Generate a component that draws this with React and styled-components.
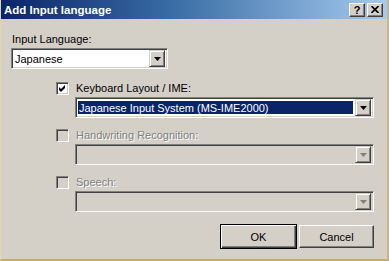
import React from 'react';
import styled, { createGlobalStyle } from 'styled-components';

const GlobalStyle = createGlobalStyle`
  body {
    margin: 0;
    background: #d4d0c8;
    font-family: "Liberation Sans", Arial, sans-serif;
    font-size: 11px;
  }
`;

const Window = styled.div`
  width: 389px;
  height: 261px;
  box-sizing: border-box;
  background: #d4d0c8;
  border-left: 1px solid #e4d6a8;
  border-right: 2px solid #c9b782;
  border-bottom: 2px solid #c3ab6a;
  display: flex;
  flex-direction: column;
`;

const TitleBar = styled.div`
  height: 19px;
  flex: none;
  display: flex;
  align-items: center;
  justify-content: space-between;
  padding: 0 4px 0 3px;
  background: linear-gradient(to right, #0a246a 0%, #3a6ea5 45%, #a6caf0 100%);
  color: #fff;
  font-weight: bold;
  font-size: 11.5px;
`;

const CaptionButtons = styled.div`
  display: flex;
  gap: 2px;
`;

const CaptionButton = styled.div`
  width: 16px;
  height: 14px;
  box-sizing: border-box;
  display: flex;
  align-items: center;
  justify-content: center;
  background: #d4d0c8;
  color: #000;
  font-size: 11px;
  font-weight: bold;
  border: 1px solid;
  border-color: #fff #404040 #404040 #fff;
  box-shadow: inset -1px -1px #808080;
`;

const Content = styled.div`
  padding: 14px 0 0 10px;
  display: flex;
  flex-direction: column;
`;

const Label = styled.div`
  line-height: 13px;
  margin-left: 1px;
  color: ${p => (p.$disabled ? '#808080' : '#000')};
  text-shadow: ${p => (p.$disabled ? '1px 1px 0 #fff' : 'none')};
  white-space: nowrap;
`;

const Combo = styled.div`
  box-sizing: border-box;
  width: ${p => p.$width}px;
  height: 21px;
  margin-top: ${p => p.$top || 0}px;
  display: flex;
  align-items: center;
  padding: 2px;
  background: ${p => (p.$disabled ? '#d4d0c8' : '#fff')};
  border: 1px solid;
  border-color: #808080 #fff #fff #808080;
  box-shadow: inset 1px 1px #404040, inset -1px -1px #d4d0c8;
`;

const ComboText = styled.div`
  flex: 1;
  align-self: stretch;
  display: flex;
  align-items: center;
  margin: 1px 2px 1px 0;
  padding-left: 1px;
  white-space: nowrap;
  background: ${p => (p.$selected ? '#0a246a' : 'transparent')};
  color: ${p => (p.$selected ? '#fff' : '#000')};
`;

const DropButton = styled.div`
  width: 16px;
  height: 17px;
  flex: none;
  box-sizing: border-box;
  display: flex;
  align-items: center;
  justify-content: center;
  background: #d4d0c8;
  border: 1px solid;
  border-color: #d4d0c8 #404040 #404040 #d4d0c8;
  box-shadow: inset 1px 1px #fff, inset -1px -1px #808080;
`;

const Group = styled.div`
  margin-left: 45px;
  margin-top: ${p => p.$top}px;
  display: flex;
  flex-direction: column;
`;

const CheckRow = styled.div`
  height: 13px;
  display: flex;
  align-items: center;
  gap: 6px;
`;

const Box = styled.div`
  width: 13px;
  height: 13px;
  box-sizing: border-box;
  display: flex;
  align-items: center;
  justify-content: center;
  background: ${p => (p.$disabled ? '#d4d0c8' : '#fff')};
  border: 1px solid;
  border-color: #808080 #fff #fff #808080;
  box-shadow: inset 1px 1px #404040, inset -1px -1px #d4d0c8;
`;

const ComboIndent = styled.div`
  margin-left: 19px;
`;

const ButtonRow = styled.div`
  display: flex;
  justify-content: flex-end;
  align-items: center;
  gap: 2px;
  margin-top: 12px;
  padding-right: 13px;
`;

const PushButton = styled.div`
  width: ${p => (p.$default ? 77 : 75)}px;
  height: ${p => (p.$default ? 25 : 23)}px;
  box-sizing: border-box;
  display: flex;
  align-items: center;
  justify-content: center;
  background: #d4d0c8;
  color: #000;
  border: 1px solid #000;
  border-color: ${p => (p.$default ? '#000' : '#fff #404040 #404040 #fff')};
  box-shadow: ${p =>
    p.$default
      ? 'inset 1px 1px #fff, inset -1px -1px #404040, inset -2px -2px #808080'
      : 'inset -1px -1px #808080'};
`;

const Arrow = ({ disabled }) => (
  <svg width="7" height="4" viewBox="0 0 7 4">
    <polygon points="0,0 7,0 3.5,4" fill={disabled ? '#808080' : '#000'} />
  </svg>
);

const Check = () => (
  <svg width="7" height="7" viewBox="0 0 7 7">
    <polygon points="0,2 2,4 6,0 6,3 2,7 0,5" fill="#000" />
  </svg>
);

const Close = () => (
  <svg width="8" height="7" viewBox="0 0 8 7">
    <path d="M0.5 0 L7.5 7 M7.5 0 L0.5 7" stroke="#000" strokeWidth="1.6" />
  </svg>
);

const ComboBox = ({ width, top, text, selected, disabled }) => (
  <Combo $width={width} $top={top} $disabled={disabled}>
    <ComboText $selected={selected}>{text}</ComboText>
    <DropButton>
      <Arrow disabled={disabled} />
    </DropButton>
  </Combo>
);

const Option = ({ label, checked, disabled, text, selected, top }) => (
  <Group $top={top}>
    <CheckRow>
      <Box $disabled={disabled}>{checked && <Check />}</Box>
      <Label $disabled={disabled}>{label}</Label>
    </CheckRow>
    <ComboIndent>
      <ComboBox width={299} top={2} text={text} selected={selected} disabled={disabled} />
    </ComboIndent>
  </Group>
);

export default function App() {
  return (
    <>
      <GlobalStyle />
      <Window>
        <TitleBar>
          <span>Add Input language</span>
          <CaptionButtons>
            <CaptionButton>?</CaptionButton>
            <CaptionButton>
              <Close />
            </CaptionButton>
          </CaptionButtons>
        </TitleBar>
        <Content>
          <Label>Input Language:</Label>
          <ComboBox width={157} top={2} text="Japanese" />
          <Option
            top={13}
            checked
            label="Keyboard Layout / IME:"
            text="Japanese Input System (MS-IME2000)"
            selected
          />
          <Option top={11} disabled label="Handwriting Recognition:" />
          <Option top={11} disabled label="Speech:" />
          <ButtonRow>
            <PushButton $default>OK</PushButton>
            <PushButton>Cancel</PushButton>
          </ButtonRow>
        </Content>
      </Window>
    </>
  );
}
